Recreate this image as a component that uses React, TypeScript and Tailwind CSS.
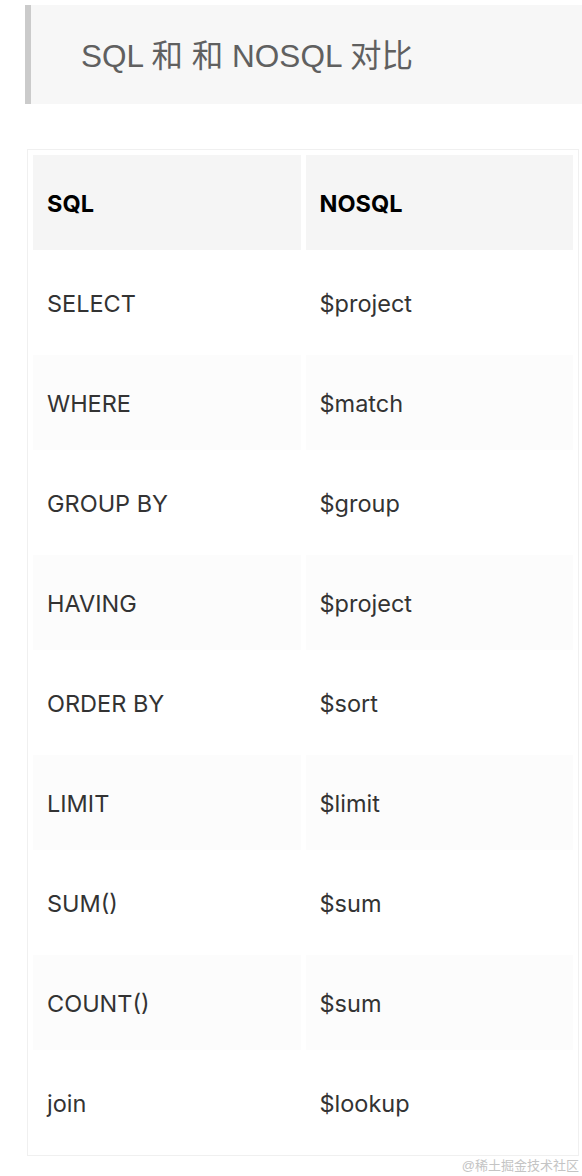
const rows: [string, string][] = [
  ['SELECT', '$project'],
  ['WHERE', '$match'],
  ['GROUP BY', '$group'],
  ['HAVING', '$project'],
  ['ORDER BY', '$sort'],
  ['LIMIT', '$limit'],
  ['SUM()', '$sum'],
  ['COUNT()', '$sum'],
  ['join', '$lookup'],
];

export default function App() {
  return (
    <div className="w-[582px] h-[1176px] bg-white overflow-hidden font-['Liberation_Sans','Noto_Sans_CJK_SC',sans-serif]">
      {/* Heading block */}
      <div className="mt-[5px] ml-[25px] h-[99px] flex items-center border-l-[6px] border-[#cbcbcb] bg-[#f7f7f7] pl-[50px] pt-[4px]">
        <h2 className="text-[31.5px] text-[#606060] font-normal">SQL 和 和 NOSQL 对比</h2>
      </div>

      {/* Comparison table */}
      <table className="mt-[45px] ml-[27px] w-[552px] table-fixed border-separate border-spacing-[5px] border border-[#f0f0f0] text-[23.5px] font-['Inter','Noto_Sans_CJK_SC',sans-serif]">
        <thead>
          <tr>
            <th className="h-[95px] bg-[#f5f5f5] pl-[14px] pt-[3px] text-left font-bold text-black">SQL</th>
            <th className="h-[95px] bg-[#f5f5f5] pl-[14px] pt-[3px] text-left font-bold text-black">NOSQL</th>
          </tr>
        </thead>
        <tbody>
          {rows.map(([sql, nosql], i) => (
            <tr key={i}>
              <td className={`h-[95px] pl-[14px] pt-[3px] text-[#333] ${i % 2 === 1 ? 'bg-[#fcfcfc]' : 'bg-white'}`}>{sql}</td>
              <td className={`h-[95px] pl-[14px] pt-[3px] text-[#333] ${i % 2 === 1 ? 'bg-[#fcfcfc]' : 'bg-white'}`}>{nosql}</td>
            </tr>
          ))}
        </tbody>
      </table>

      <div className="w-[579px] text-right text-[13px] leading-[16px] mt-[2px] text-[#c4c4c4]">@稀土掘金技术社区</div>
    </div>
  );
}
